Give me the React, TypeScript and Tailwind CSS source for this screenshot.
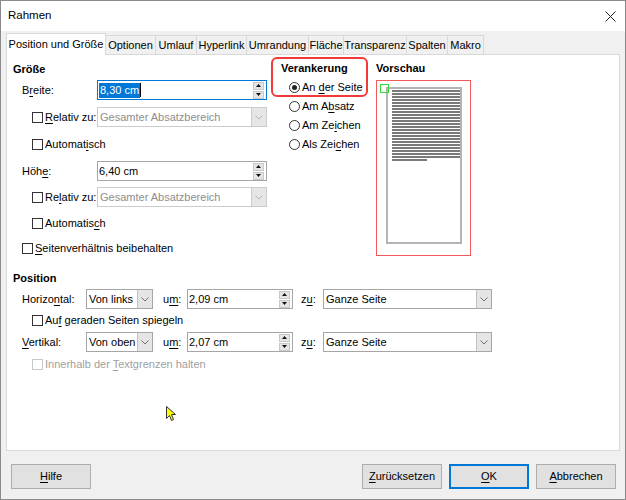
import React from "react";

const U = ({ c }: { c: string }) => (
  <span className="underline underline-offset-2 decoration-1">{c}</span>
);

const Box = ({ disabled }: { disabled?: boolean }) => (
  <span
    className={`w-[11px] h-[11px] border bg-white shrink-0 ${
      disabled ? "border-[#c8c8c8]" : "border-[#333333]"
    }`}
  />
);

const Radio = ({ on }: { on?: boolean }) => (
  <span className="w-[11px] h-[11px] rounded-full border border-[#333333] bg-white flex items-center justify-center shrink-0">
    {on && <span className="w-[5px] h-[5px] rounded-full bg-[#222]" />}
  </span>
);

const Chevron = ({ color }: { color: string }) => (
  <svg width="8" height="5" viewBox="0 0 8 5">
    <path d="M0.5 0.5 L4 4 L7.5 0.5" fill="none" stroke={color} strokeWidth="1" />
  </svg>
);

const Combo = ({
  value,
  disabled,
  w,
}: {
  value: string;
  disabled?: boolean;
  w: string;
}) => (
  <div
    className={`h-[20px] ${w} flex bg-white border ${
      disabled ? "border-[#cccccc] text-[#8d8d8d]" : "border-[#a6a6a6]"
    }`}
  >
    <div className="flex-1 pl-[2px] flex items-center whitespace-nowrap overflow-hidden">
      {value}
    </div>
    <div
      className={`w-[15px] flex items-center justify-center border-l ${
        disabled ? "bg-[#e6e6e6] border-[#cccccc]" : "bg-[#e5e5e5] border-[#c2c2c2]"
      }`}
    >
      <Chevron color={disabled ? "#b8b8b8" : "#707070"} />
    </div>
  </div>
);

const Arrow = ({ up }: { up?: boolean }) => (
  <span className="h-[8px] bg-[#e5e5e5] border border-[#c8c8c8] flex items-center justify-center">
    <svg width="5" height="3" viewBox="0 0 5 3">
      <path d={up ? "M0 3 L2.5 0 L5 3Z" : "M0 0 L2.5 3 L5 0Z"} fill="#111" />
    </svg>
  </span>
);

const Spin = ({
  children,
  focused,
  w,
}: {
  children: React.ReactNode;
  focused?: boolean;
  w: string;
}) => (
  <div
    className={`h-[20px] ${w} flex items-center bg-white border ${
      focused ? "border-[#0078d7]" : "border-[#a6a6a6]"
    }`}
  >
    <div className="flex-1 pl-[1px] flex items-center whitespace-nowrap">{children}</div>
    <div className="flex flex-col w-[11px] mr-[2px] gap-[1px]">
      <Arrow up />
      <Arrow />
    </div>
  </div>
);

const Tab = ({ label, w, active }: { label: string; w: string; active?: boolean }) => (
  <div
    className={`${w} flex items-center justify-center border-t border-l border-r border-[#d9d9d9] whitespace-nowrap ${
      active ? "relative z-10 h-[22px] -mb-px bg-white -mr-px" : "h-[19px] bg-[#f0f0f0] -mr-px"
    }`}
  >
    {label}
  </div>
);

const Btn = ({ children, def }: { children: React.ReactNode; def?: boolean }) => (
  <div
    className={`w-[80px] h-[25px] flex items-center justify-center bg-[#e1e1e1] ${
      def ? "border-2 border-[#0078d7]" : "border border-[#adadad]"
    }`}
  >
    {children}
  </div>
);

export default function App() {
  const lines = Array.from({ length: 23 });
  return (
    <div className="w-[626px] h-[500px] flex flex-col bg-[#f0f0f0] border border-[#8a8a8a] text-[11px] text-black [font-family:'Liberation_Sans',Arial,sans-serif] overflow-hidden">
      {/* title bar */}
      <div className="h-[30px] bg-white flex items-center justify-between pl-[7px] pr-[9px] shrink-0">
        <span className="text-[11.5px]">Rahmen</span>
        <svg width="11" height="11" viewBox="0 0 11 11">
          <path d="M0.5 0.5 L10.5 10.5 M10.5 0.5 L0.5 10.5" stroke="#222" strokeWidth="1" />
        </svg>
      </div>

      <div className="flex-1 flex flex-col px-[5px]">
        {/* tabs */}
        <div className="mt-[2px] h-[21px] flex items-end">
          <Tab label="Position und Größe" w="w-[100px]" active />
          <Tab label="Optionen" w="w-[51px]" />
          <Tab label="Umlauf" w="w-[42px]" />
          <Tab label="Hyperlink" w="w-[51px]" />
          <Tab label="Umrandung" w="w-[63px]" />
          <Tab label="Fläche" w="w-[36px]" />
          <Tab label="Transparenz" w="w-[64px]" />
          <Tab label="Spalten" w="w-[42px]" />
          <Tab label="Makro" w="w-[37px]" />
        </div>

        {/* panel */}
        <div className="relative h-[397px] bg-white border border-[#d9d9d9]">
          <div className="flex">
            {/* Größe */}
            <div className="w-[264px] flex flex-col">
              <div className="mt-[6px] h-[16px] pl-[6px] flex items-center font-bold">Größe</div>
              <div className="mt-[3px] h-[20px] pl-[15px] flex items-center">
                <span className="w-[75px]">
                  B<U c="r" />eite:
                </span>
                <Spin w="w-[170px]" focused>
                  <span className="bg-[#0078d7] text-white px-[1px] leading-[15px]">8,30 cm</span>
                  <span className="w-px h-[14px] bg-black" />
                </Spin>
              </div>
              <div className="mt-[7px] h-[20px] pl-[25px] flex items-center">
                <span className="w-[65px] flex items-center gap-[2px]">
                  <Box />
                  <span>
                    <U c="R" />
                    elativ zu:
                  </span>
                </span>
                <Combo value="Gesamter Absatzbereich" disabled w="w-[170px]" />
              </div>
              <div className="mt-[7px] h-[20px] pl-[25px] flex items-center gap-[2px]">
                <Box />
                <span>
                  Automat<U c="i" />sch
                </span>
              </div>
              <div className="mt-[7px] h-[20px] pl-[15px] flex items-center">
                <span className="w-[75px]">
                  Höh<U c="e" />:
                </span>
                <Spin w="w-[170px]">6,40 cm</Spin>
              </div>
              <div className="mt-[6px] h-[20px] pl-[25px] flex items-center">
                <span className="w-[65px] flex items-center gap-[2px]">
                  <Box />
                  <span>
                    Re<U c="l" />ativ zu:
                  </span>
                </span>
                <Combo value="Gesamter Absatzbereich" disabled w="w-[170px]" />
              </div>
              <div className="mt-[6px] h-[20px] pl-[25px] flex items-center gap-[2px]">
                <Box />
                <span>
                  Automatis<U c="c" />h
                </span>
              </div>
              <div className="mt-[5px] h-[20px] pl-[15px] flex items-center gap-[2px]">
                <Box />
                <span>
                  <U c="S" />
                  eitenverhältnis beibehalten
                </span>
              </div>
            </div>

            {/* Verankerung */}
            <div className="relative w-[105px] flex flex-col">
              <div className="mt-[5px] h-[16px] pl-[10px] flex items-center font-bold">Verankerung</div>
              <div className="mt-[1px] h-[20px] pl-[18px] flex items-center gap-[2px]">
                <Radio on />
                <span>
                  An <U c="d" />er Seite
                </span>
              </div>
              <div className="h-[19px] pl-[18px] flex items-center gap-[2px]">
                <Radio />
                <span>
                  Am A<U c="b" />satz
                </span>
              </div>
              <div className="h-[19px] pl-[18px] flex items-center gap-[2px]">
                <Radio />
                <span>
                  Am Ze<U c="i" />chen
                </span>
              </div>
              <div className="h-[19px] pl-[18px] flex items-center gap-[2px]">
                <Radio />
                <span>
                  Als Zei<U c="c" />hen
                </span>
              </div>
              <div className="absolute left-0 top-[2px] w-[97px] h-[40px] rounded-[6px] border-2 border-[#f23a3a]" />
            </div>

            {/* Vorschau */}
            <div className="flex flex-col">
              <div className="mt-[5px] h-[16px] flex items-center font-bold">Vorschau</div>
              <div className="relative mt-[4px] w-[95px] h-[176px] border border-[#f25a5a] pt-[6px] pl-[9px]">
                <div className="w-[76px] h-[157px] border-2 border-[#b4b4b4] pt-px pl-[4px] flex flex-col gap-px">
                  {lines.map((_, i) => (
                    <span key={i} className="w-[68px] h-[2px] bg-[#7a7a7a]" />
                  ))}
                  <span className="w-[35px] h-[2px] bg-[#7a7a7a]" />
                </div>
                <div className="absolute left-[3px] top-[3px] w-[9px] h-[9px] border border-[#36d636]" />
              </div>
            </div>
          </div>

          {/* Position */}
          <div className="flex flex-col">
            <div className="mt-[12px] h-[16px] pl-[6px] flex items-center font-bold">Position</div>
            <div className="mt-[3px] h-[20px] pl-[15px] flex items-center">
              <span className="w-[64px]">
                Horizo<U c="n" />tal:
              </span>
              <Combo value="Von links" w="w-[67px]" />
              <span className="ml-[10px] w-[24px]">
                u<U c="m" />:
              </span>
              <Spin w="w-[106px]">2,09 cm</Spin>
              <span className="ml-[8px] w-[22px]">
                z<U c="u" />:
              </span>
              <Combo value="Ganze Seite" w="w-[169px]" />
            </div>
            <div className="mt-px h-[20px] pl-[25px] flex items-center gap-[2px]">
              <Box />
              <span>
                Au<U c="f" /> geraden Seiten spiegeln
              </span>
            </div>
            <div className="mt-[2px] h-[20px] pl-[15px] flex items-center">
              <span className="w-[64px]">
                <U c="V" />
                ertikal:
              </span>
              <Combo value="Von oben" w="w-[67px]" />
              <span className="ml-[10px] w-[24px]">
                u<U c="m" />:
              </span>
              <Spin w="w-[106px]">2,07 cm</Spin>
              <span className="ml-[8px] w-[22px]">
                z<U c="u" />:
              </span>
              <Combo value="Ganze Seite" w="w-[169px]" />
            </div>
            <div className="mt-[2px] h-[20px] pl-[25px] flex items-center gap-[2px] text-[#a0a0a0]">
              <Box disabled />
              <span>
                Innerhalb der <U c="T" />
                extgrenzen halten
              </span>
            </div>
          </div>

          {/* mouse pointer */}
          <svg
            className="absolute left-[159px] top-[351px]"
            width="11"
            height="16"
            viewBox="0 0 11 16"
          >
            <path
              d="M0.5 0.5 L0.5 12.5 L3.5 9.5 L5.5 14.5 L7.5 13.5 L5.5 8.5 L9.5 8.5 Z"
              fill="#ffff00"
              stroke="#333"
              strokeWidth="1"
              strokeLinejoin="round"
            />
          </svg>
        </div>

        {/* buttons */}
        <div className="mt-[13px] flex items-center">
          <div className="ml-[5px]">
            <Btn>
              <span>
                <U c="H" />
                ilfe
              </span>
            </Btn>
          </div>
          <div className="ml-auto mr-[4px] flex gap-[7px]">
            <Btn>
              <span>
                <U c="Z" />
                urücksetzen
              </span>
            </Btn>
            <Btn def>
              <span>
                <U c="O" />K
              </span>
            </Btn>
            <Btn>
              <span>
                <U c="A" />
                bbrechen
              </span>
            </Btn>
          </div>
        </div>
      </div>
    </div>
  );
}
